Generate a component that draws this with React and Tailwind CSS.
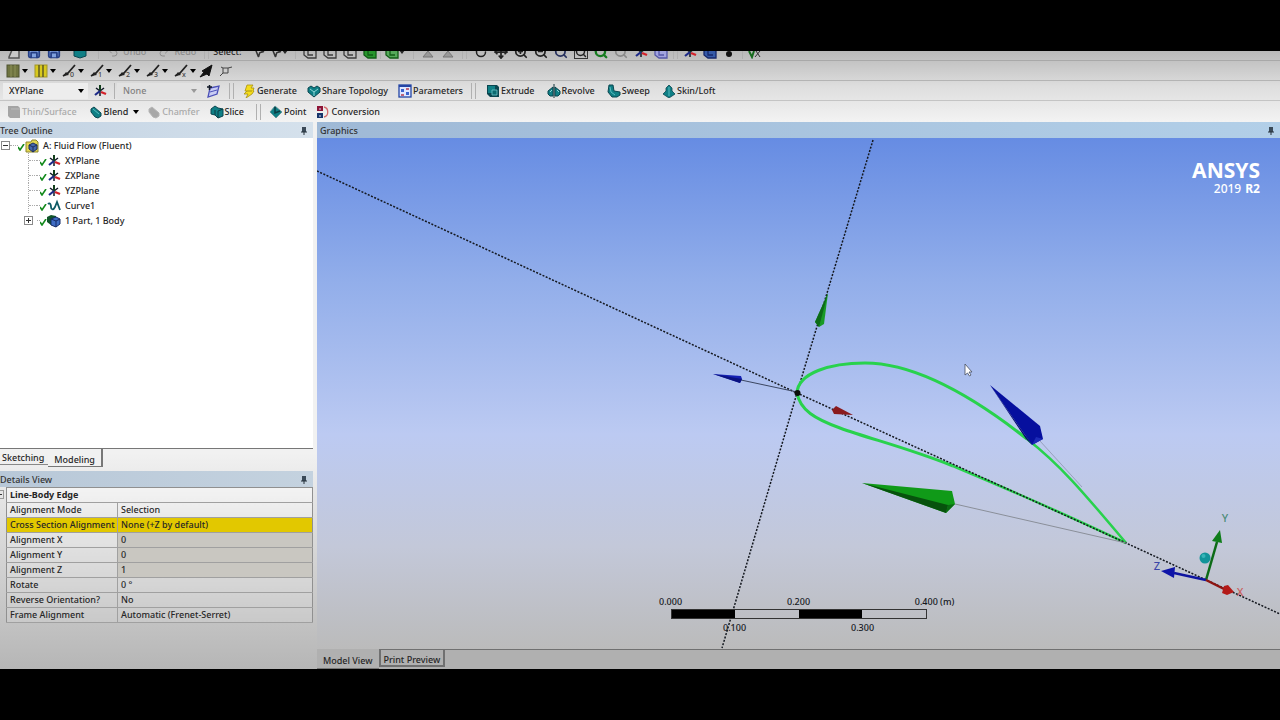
import clsx from 'clsx'
import { Undo2, Redo2, MousePointer2, Save, ZoomIn, ZoomOut, Search, Move, RotateCw } from 'lucide-react'

const teal = '#0f7f85'
const tealDark = '#0a4650'

function Glyph({ children, className }) {
  return (
    <svg viewBox="0 0 14 14" className={clsx('h-3.5 w-3.5 shrink-0', className)} aria-hidden="true">
      {children}
    </svg>
  )
}

function Caret({ className }) {
  return (
    <svg viewBox="0 0 6 4" className={clsx('h-1 w-1.5 shrink-0', className)} aria-hidden="true">
      <path d="M0 0h6L3 4z" fill="currentColor" />
    </svg>
  )
}

function Divider({ double }) {
  return (
    <span className="flex shrink-0 gap-[3px]">
      <span className="h-4 w-px bg-[#b0b0b0]" />
      {double && <span className="h-4 w-px bg-[#b0b0b0]" />}
    </span>
  )
}

function AxisIcon() {
  return (
    <Glyph>
      <path d="M7 7L3 4M7 7l4-3M7 7v5" stroke="#111827" strokeWidth="1.500" />
      <path d="M7 7V1" stroke="#123f1c" strokeWidth="2" />
      <path d="M7 7l-5 4" stroke="#1d2a88" strokeWidth="2.200" />
      <path d="M8 8l5 2" stroke="#d3222a" strokeWidth="2.200" />
    </Glyph>
  )
}

function GenerateIcon() {
  return (
    <Glyph>
      <path d="M5 1h6L9 4h3l-1 3h1l-2 3-6 4 2-4H2l3-3H3z" fill="#f4dc1a" stroke="#a89212" strokeWidth=".8" />
      <path d="M5 7h5" stroke="#a89212" />
    </Glyph>
  )
}

function ShareIcon() {
  return (
    <Glyph>
      <path d="M1 4l3-2 3 2 3-2 3 2v4l-6 5-6-5z" fill={teal} stroke={tealDark} />
      <path d="M3 5l4 3 4-3M7 8v4" stroke="#8fd6d6" fill="none" />
    </Glyph>
  )
}

function ParametersIcon() {
  return (
    <Glyph>
      <rect x="1" y="1" width="12" height="12" fill="#dfe7ff" stroke="#2445a5" strokeWidth="1.300" />
      <path d="M1 2h12" stroke="#2445a5" strokeWidth="2" />
      <path d="M3 5h3v3H3zM8 8h3v3H8z" fill="#3a62cf" />
      <path d="M8 5h3M3 11h3" stroke="#b33a4d" strokeWidth="1.500" />
    </Glyph>
  )
}

function ExtrudeIcon() {
  return (
    <Glyph>
      <path d="M1 1h10l2 2v10H4l-3-3z" fill={tealDark} />
      <path d="M2 2h7v7H2z" fill={teal} />
      <path d="M6 6h5v5H6z" fill="#0b6a70" stroke="#6fc7cb" strokeWidth=".8" />
    </Glyph>
  )
}

function RevolveIcon() {
  return (
    <Glyph>
      <path d="M6 3v9H3L1 10V7zM8 3v9h3l2-2V7z" fill={teal} stroke={tealDark} />
      <path d="M7 0v14" stroke="#10333b" />
      <path d="M3 8l2-2M10 6l2 2" stroke="#8fd6d6" />
    </Glyph>
  )
}

function SweepIcon() {
  return (
    <Glyph>
      <path d="M2 1h4l1 6 6 1v3l-3 2H5L1 8z" fill={teal} stroke={tealDark} />
      <path d="M3 3l1 5 4 3" stroke="#59bcc0" fill="none" />
    </Glyph>
  )
}

function LoftIcon() {
  return (
    <Glyph>
      <path d="M7 1l3 3v3l3 3-6 4-6-4 3-3V4z" fill={teal} stroke={tealDark} strokeWidth=".8" />
      <path d="M7 3v9" stroke="#59bcc0" />
    </Glyph>
  )
}

function ThinIcon() {
  return (
    <Glyph>
      <path d="M1 1h10l2 2v10H3l-2-2z" fill="#a5a5a5" />
      <path d="M4 4h9" stroke="#bcbcbc" />
    </Glyph>
  )
}

function BlendIcon({ disabled }) {
  return (
    <Glyph>
      <path
        d="M2 4l3-2 7 6v3l-3 2-3-1-4-5z"
        fill={disabled ? '#a8a8a8' : teal}
        stroke={disabled ? '#b5b5b5' : tealDark}
      />
      {!disabled && <path d="M4 4l6 5" stroke="#59bcc0" />}
    </Glyph>
  )
}

function SliceIcon() {
  return (
    <Glyph>
      <path d="M1 4l4-3 3 2 5 1v7l-5 2-3-3-4-1z" fill={teal} stroke={tealDark} />
      <path d="M5 5v5M8 6l5-2M8 6v7" stroke="#0a3c44" />
    </Glyph>
  )
}

function PointIcon() {
  return (
    <Glyph>
      <path d="M1 7l5-6 7 6-6 6z" fill={teal} stroke="#5c8f93" strokeWidth=".8" />
      <path d="M6 2v6l5-2" stroke="#0a3c44" strokeWidth="1.500" fill="none" />
    </Glyph>
  )
}

function ConversionIcon() {
  return (
    <Glyph>
      <path d="M1 1h6v5H1z" fill="#8d1436" />
      <path d="M1 8h6v5H1z" fill="#17356b" />
      <path d="M8 2c5 1 5 9 0 10" stroke="#d46a6a" fill="none" strokeWidth="1.300" />
      <path d="M4 3v2M4 10v2" stroke="#d8d8f0" />
    </Glyph>
  )
}

function NewPlaneIcon() {
  return (
    <Glyph>
      <path d="M4 4l9-2-2 8-9 3z" fill="#c9cdf4" stroke="#4b50b8" strokeWidth="1.300" />
      <path d="M4 8l7-2" stroke="#4b50b8" />
      <path d="M1 3h5M3.500 1v5" stroke="#111827" strokeWidth="1.500" />
    </Glyph>
  )
}

function CubeIcon({ color = '#3c3c3c', fill = 'none' }) {
  return (
    <Glyph>
      <path d="M1 3h8l4 3v7H5l-4-3z" fill={fill} stroke={color} strokeWidth="1.300" />
      <path d="M5 5v5h5" stroke={color} strokeWidth="1.300" fill="none" />
    </Glyph>
  )
}

function ToolButton({ icon, label, disabled, caret }) {
  return (
    <button
      type="button"
      disabled={disabled}
      className="flex shrink-0 items-center gap-px whitespace-nowrap text-[#262626] disabled:text-[#aaaaaa]"
    >
      {icon}
      <span>{label}</span>
      {caret && <Caret className="ml-1 text-black" />}
    </button>
  )
}

function IconSlot({ label, children }) {
  return (
    <button type="button" aria-label={label} className="flex h-3.5 w-5 shrink-0 items-center justify-center">
      {children}
    </button>
  )
}

function StandardBar() {
  return (
    <div className="flex h-2.5 items-end overflow-hidden border-b border-[#a8a8a8] pb-px pl-1">
      <IconSlot label="New">
        <Glyph><path d="M2 12L5 5h7v8H2z" fill="#c8c8c8" stroke="#555" strokeWidth="1.500" /></Glyph>
      </IconSlot>
      <IconSlot label="Save"><Save className="h-3.5 w-3.5 fill-[#7fa0dc] text-[#263f85]" strokeWidth={3} /></IconSlot>
      <IconSlot label="Save as"><Save className="h-3.5 w-3.5 fill-[#7fa0dc] text-[#263f85]" strokeWidth={3} /></IconSlot>
      <span className="w-1.5" />
      <IconSlot label="Image"><Glyph><path d="M1 4h12v7l-6 2-6-2z" fill={teal} stroke={tealDark} /></Glyph></IconSlot>
      <span className="ml-2"><Divider /></span>
      <button type="button" disabled className="ml-2 flex h-3.5 items-center gap-1 text-[#8d8d8d]">
        <Undo2 className="h-3 w-3" />Undo
      </button>
      <button type="button" disabled className="ml-3 flex h-3.5 items-center gap-1 text-[#8d8d8d]">
        <Redo2 className="h-3 w-3" />Redo
      </button>
      <span className="mr-1 ml-2"><Divider double /></span>
      <span className="flex h-3.5 w-9 items-center text-[#262626]">Select:</span>
      <IconSlot label="Select"><MousePointer2 className="h-3 w-3 text-[#333]" strokeWidth={3} /></IconSlot>
      <IconSlot label="Select mode"><MousePointer2 className="h-3 w-3 text-[#333]" strokeWidth={3} /><Caret /></IconSlot>
      <span className="mr-1 ml-1.5"><Divider /></span>
      <IconSlot label="Points"><CubeIcon /></IconSlot>
      <IconSlot label="Edges"><CubeIcon /></IconSlot>
      <IconSlot label="Faces"><CubeIcon /></IconSlot>
      <IconSlot label="Bodies"><CubeIcon color="#115c16" fill="#27962d" /></IconSlot>
      <span className="mr-1"><Divider /></span>
      <IconSlot label="Extend"><CubeIcon color="#115c16" fill="#55a85a" /><Caret /></IconSlot>
      <span className="mr-1 ml-2"><Divider /></span>
      <IconSlot label="Expand"><Glyph><path d="M2 12l5-6 5 6z" fill="#999" stroke="#777" /></Glyph></IconSlot>
      <IconSlot label="Shrink"><Glyph><path d="M2 12l5-6 5 6z" fill="#999" stroke="#777" /></Glyph></IconSlot>
      <span className="mr-1 ml-1"><Divider double /></span>
      <IconSlot label="Rotate"><RotateCw className="h-3 w-3 text-[#222]" strokeWidth={3} /></IconSlot>
      <IconSlot label="Pan"><Move className="h-3.5 w-3.5 text-[#222]" strokeWidth={3} /></IconSlot>
      <IconSlot label="Zoom in"><ZoomIn className="h-3.5 w-3.5 text-[#222]" strokeWidth={3} /></IconSlot>
      <IconSlot label="Zoom out"><ZoomOut className="h-3.5 w-3.5 text-[#222]" strokeWidth={3} /></IconSlot>
      <IconSlot label="Box zoom"><Search className="h-3.5 w-3.5 text-[#27315e]" strokeWidth={3} /></IconSlot>
      <IconSlot label="Zoom to fit"><Search className="h-3.5 w-3.5 border border-[#333] text-[#222]" strokeWidth={3} /></IconSlot>
      <IconSlot label="Magnify"><Search className="h-3.5 w-3.5 text-[#167b20]" strokeWidth={4} /></IconSlot>
      <IconSlot label="Previous view"><Search className="h-3.5 w-3.5 text-[#8a8a8a]" strokeWidth={3} /></IconSlot>
      <IconSlot label="Next view"><AxisIcon /></IconSlot>
      <IconSlot label="Iso view"><CubeIcon color="#5557a8" fill="#a2a4df" /></IconSlot>
      <span className="mx-0.5"><Divider double /></span>
      <IconSlot label="Display plane"><AxisIcon /></IconSlot>
      <IconSlot label="Display model"><CubeIcon color="#16276b" fill="#355aa8" /></IconSlot>
      <IconSlot label="Display points"><Glyph><circle cx="6" cy="9" r="3" fill="#111" /></Glyph></IconSlot>
      <span className="mx-0.5"><Divider /></span>
      <IconSlot label="Look at"><Glyph><path d="M1 6l3 6 2-6" stroke="#176b1e" strokeWidth="2" fill="none" /><path d="M7 12l5-6M8 6l4 6" stroke="#333" /></Glyph></IconSlot>
    </div>
  )
}

const edgeTools = ['0', '1', '2', '3', 'x']

function DisplayBar() {
  return (
    <div className="flex h-5 items-center border-b border-[#b4b4b4] pl-1.5 text-black">
      <button type="button" aria-label="Face color" className="flex w-7 shrink-0 items-center gap-0.5">
        <Glyph>
          <rect x="1" y="1" width="12" height="12" fill="#6f7440" stroke="#4f5330" />
          <path d="M5 1v12M9 1v12" stroke="#8d9158" />
        </Glyph>
        <Caret />
      </button>
      <button type="button" aria-label="Edge color" className="flex w-7 shrink-0 items-center gap-0.5">
        <Glyph>
          <rect x="1" y="1" width="12" height="12" fill="#d8c91c" stroke="#a1952a" />
          <path d="M5 1v12M9 1v12" stroke="#5d5a22" strokeWidth="1.500" />
        </Glyph>
        <Caret />
      </button>
      {edgeTools.map((name) => (
        <button key={name} type="button" aria-label={`Edge joints ${name}`} className="flex w-7 shrink-0 items-center">
          <svg viewBox="0 0 16 14" className="h-3.5 w-4" aria-hidden="true">
            <path d="M1 12l5-3 7-8" stroke="#222" strokeWidth="1.800" fill="none" />
            <path d="M1 12l6-1-3-3z" fill="#222" />
            <text x="8" y="13" fontSize="7" fill="#444">{name}</text>
          </svg>
          <Caret />
        </button>
      ))}
      <IconSlot label="Edge direction">
        <svg viewBox="0 0 14 14" className="-ml-3 h-3.5 w-3.5" aria-hidden="true">
          <path d="M1 13l4-5-2-1 10-6-3 11-2-2z" fill="#111" stroke="#111" />
        </svg>
      </IconSlot>
      <IconSlot label="Vertices">
        <svg viewBox="0 0 14 14" className="-ml-3 h-3.5 w-3.5" aria-hidden="true">
          <path d="M4 4h5v5H4zM9 4l4-1M4 9l-3 3M4 4L2 3" stroke="#444" fill="none" />
        </svg>
      </IconSlot>
    </div>
  )
}

function Combo({ label, value, disabled, className }) {
  return (
    <label className={clsx('relative flex shrink-0 items-center', className)}>
      <span className="sr-only">{label}</span>
      <select
        disabled={disabled}
        defaultValue={value}
        className="h-4 w-full appearance-none bg-[#ededed] pl-1.5 text-[9px] text-[#262626] disabled:bg-[#e2e2e2] disabled:text-[#808080] disabled:opacity-100"
      >
        <option>{value}</option>
      </select>
      <Caret className={clsx('absolute right-1', disabled ? 'text-[#999]' : 'text-black')} />
    </label>
  )
}

function FeatureBar() {
  return (
    <div className="flex h-5 items-center border-b border-[#c4c4c4] pl-[3px]">
      <Combo label="Active plane" value="XYPlane" className="w-[85px]" />
      <span className="ml-0.5 flex"><IconSlot label="Plane axes"><AxisIcon /></IconSlot></span>
      <span className="mr-0.5 ml-1"><Divider /></span>
      <Combo label="Active sketch" value="None" disabled className="w-[84px]" />
      <span className="ml-0.5 flex"><IconSlot label="New sketch"><NewPlaneIcon /></IconSlot></span>
      <span className="mr-2 ml-1.5"><Divider double /></span>
      <div className="flex gap-2.5">
        <ToolButton icon={<GenerateIcon />} label="Generate" />
        <ToolButton icon={<ShareIcon />} label="Share Topology" />
        <ToolButton icon={<ParametersIcon />} label="Parameters" />
      </div>
      <span className="mr-2.5 ml-2"><Divider double /></span>
      <div className="flex gap-3">
        <ToolButton icon={<ExtrudeIcon />} label="Extrude" />
        <ToolButton icon={<RevolveIcon />} label="Revolve" />
        <ToolButton icon={<SweepIcon />} label="Sweep" />
        <ToolButton icon={<LoftIcon />} label="Skin/Loft" />
      </div>
    </div>
  )
}

function ModifyBar() {
  return (
    <div className="flex h-[21px] items-center pl-[7px]">
      <div className="flex gap-3">
        <ToolButton icon={<ThinIcon />} label="Thin/Surface" disabled />
        <ToolButton icon={<BlendIcon />} label="Blend" caret />
        <div className="-ml-1 flex gap-2.5">
          <ToolButton icon={<BlendIcon disabled />} label="Chamfer" disabled />
          <ToolButton icon={<SliceIcon />} label="Slice" />
        </div>
      </div>
      <span className="mr-2 ml-3"><Divider double /></span>
      <div className="flex gap-2.5">
        <ToolButton icon={<PointIcon />} label="Point" />
        <ToolButton icon={<ConversionIcon />} label="Conversion" />
      </div>
    </div>
  )
}

function PaneTitle({ children, className }) {
  return (
    <div className={clsx('flex h-4 shrink-0 items-center justify-between pt-px pr-1.5 text-[#333]', className)}>
      <h2>{children}</h2>
      <svg viewBox="0 0 6 8" className="h-2 w-1.5" aria-hidden="true">
        <path d="M1 0h4v5H1z" fill="#3b4a58" />
        <path d="M0 5h6M3 5v3" stroke="#26323d" />
      </svg>
    </div>
  )
}

function Expander({ open }) {
  return (
    <button
      type="button"
      aria-label={open ? 'Collapse' : 'Expand'}
      className="flex h-[9px] w-[9px] shrink-0 items-center justify-center border border-[#8a8a8a] bg-white"
    >
      <svg viewBox="0 0 5 5" className="h-[5px] w-[5px]" aria-hidden="true">
        <path d={open ? 'M0 2.500h5' : 'M0 2.500h5M2.500 0v5'} stroke="#333" />
      </svg>
    </button>
  )
}

function Check() {
  return (
    <svg viewBox="0 0 7 7" className="mt-1 h-[7px] w-[7px] shrink-0" aria-hidden="true">
      <path d="M0 3l2 3 4-6" stroke="#138a1c" strokeWidth="1.600" fill="none" />
    </svg>
  )
}

const treeItems = [
  { label: 'XYPlane', icon: <AxisIcon /> },
  { label: 'ZXPlane', icon: <AxisIcon /> },
  { label: 'YZPlane', icon: <AxisIcon /> },
  {
    label: 'Curve1',
    icon: <Glyph><path d="M1 5c2-2 3 1 3 3s2 4 4 0l2-5 3 8" stroke="#0d5964" strokeWidth="1.800" fill="none" /></Glyph>,
  },
  {
    label: '1 Part, 1 Body',
    expandable: true,
    icon: (
      <Glyph>
        <path d="M0 3l4-2 5 1v8l-5 1-4-3z" fill="#10542a" />
        <path d="M4 5l5-2 4 2v5l-4 3-5-2z" fill="#3f6dc4" stroke="#152b66" />
        <path d="M4 5l5 2 4-2M9 7v6" stroke="#152b66" fill="none" />
      </Glyph>
    ),
  },
]

function TreeOutline() {
  return (
    <div className="min-h-0 flex-1 bg-white">
      <div className="flex h-[15px] items-center pl-px">
        <Expander open />
        <span className="w-2 border-t border-dotted border-[#aaa]" />
        <Check />
        <Glyph>
          <path d="M1 3h5l1-2h4l2 2v10H1z" fill="#e4d850" stroke="#8c8630" />
          <path d="M4 6l4-2 4 2v4l-4 3-4-3z" fill="#4668ae" stroke="#1e2f5d" />
          <path d="M4 6l4 2 4-2M8 8v5" stroke="#1e2f5d" fill="none" />
        </Glyph>
        <span className="ml-1">A: Fluid Flow (Fluent)</span>
      </div>
      <ul className="ml-7">
        {treeItems.map((item) => (
          <li
            key={item.label}
            className={clsx(
              'flex h-[15px] items-center',
              !item.expandable && 'border-l border-dotted border-[#aaa]',
            )}
          >
            {item.expandable ? (
              <span className="-ml-1 flex w-[13px] items-center"><Expander /></span>
            ) : (
              <span className="w-2 border-t border-dotted border-[#aaa]" />
            )}
            <span className="w-[3px] border-t border-dotted border-[#aaa]" />
            <Check />
            <span className="flex">{item.icon}</span>
            <span className="ml-1">{item.label}</span>
          </li>
        ))}
      </ul>
    </div>
  )
}

const details = [
  ['Alignment Mode', 'Selection'],
  ['Cross Section Alignment', 'None (+Z by default)', 'selected'],
  ['Alignment X', '0', 'locked'],
  ['Alignment Y', '0', 'locked'],
  ['Alignment Z', '1', 'locked'],
  ['Rotate', '0 °'],
  ['Reverse Orientation?', 'No'],
  ['Frame Alignment', 'Automatic (Frenet-Serret)'],
]

function DetailsView() {
  return (
    <div className="flex">
      <div className="flex h-[15px] w-1.5 shrink-0 items-center overflow-hidden">
        <button
          type="button"
          aria-label="Collapse group"
          className="flex h-[9px] w-1 items-center border border-l-0 border-[#999]"
        >
          <span className="h-px w-0.5 bg-[#333]" />
        </button>
      </div>
      <table className="w-full table-fixed border-collapse border border-[#909090] bg-linear-to-b from-[#f3f3f3] to-[#c9c9c9] text-left">
        <colgroup>
          <col className="w-[111px]" />
          <col />
        </colgroup>
        <thead>
          <tr className="h-[15px] border-b border-[#a0a0a0]">
            <th colSpan={2} className="p-0 pl-[3px] font-bold">Line-Body Edge</th>
          </tr>
        </thead>
        <tbody>
          {details.map(([name, value, state]) => (
            <tr key={name} className={clsx('h-[15px] border-b border-[#a0a0a0]', state === 'selected' && 'bg-[#e2c800]')}>
              <th className="truncate border-r border-[#a0a0a0] p-0 pl-[3px] font-medium">{name}</th>
              <td className={clsx('truncate p-0 pl-[3px]', state === 'locked' && 'bg-[#c9c7c1]')}>{value}</td>
            </tr>
          ))}
        </tbody>
      </table>
    </div>
  )
}

function SidePanel() {
  return (
    <aside className="flex w-[313px] shrink-0 flex-col">
      <PaneTitle className="bg-linear-to-r from-[#c3d3e3] to-[#d5e1ec]">Tree Outline</PaneTitle>
      <TreeOutline />
      <div className="flex h-[23px] shrink-0 items-start border-t border-[#777]">
        <button type="button" className="h-4 border-b border-[#888] pt-0.5 pr-1 pl-0.5">Sketching</button>
        <button type="button" className="h-[18px] border-r-2 border-b border-[#777] bg-[#f1f1f1] px-1.5 pt-1">
          Modeling
        </button>
      </div>
      <PaneTitle className="bg-linear-to-r from-[#b8c8d8] to-[#c4d2df]">Details View</PaneTitle>
      <DetailsView />
      <div className="h-[46px] shrink-0" />
    </aside>
  )
}

function Scene() {
  return (
    <svg
      viewBox="317 138 963 511"
      preserveAspectRatio="xMidYMid slice"
      className="absolute inset-0 h-full w-full"
      role="img"
      aria-label="Airfoil curve on the XY plane"
    >
      <path d="M873 140L797 393L722 648" stroke="#14181f" strokeWidth="1.500" strokeDasharray="2 1.500" fill="none" />

      <g fill="none" stroke="#28d24c" strokeLinejoin="round">
        <path d="M797 393C798 373 830 363 865 363C917 363 975 398 1027 439" strokeWidth="3" />
        <path d="M1027 439C1062 466 1088 498 1126 543" strokeWidth="2.500" />
        <path d="M797 393C800 410 815 419 840 428C870 439 905 447 953 466" strokeWidth="3" />
        <path d="M953 466C1010 490 1065 514 1126 543" strokeWidth="2.500" />
      </g>
      <path d="M317 171L797 393L1126 543L1280 614" stroke="#14181f" strokeWidth="1.500" strokeDasharray="2 1.500" fill="none" />

      <path d="M741 380L797 392" stroke="#3b4660" />
      <path d="M713 374L741 376L742 379L740 383z" fill="#1420b4" />
      <path d="M713 374L742 379L740 383z" fill="#0a1280" />
      <path d="M828 293L824 324L819 327L815 322z" fill="#189a26" />
      <path d="M828 293L819 327L815 322z" fill="#0c6b18" />
      <path d="M832 410L836 406L853 415L834 414z" fill="#8a1a1e" />
      <circle cx="797.500" cy="393" r="3" fill="#0b0f0b" />

      <path d="M1040 441L1082 487" stroke="#98a1bd" />
      <path d="M990 385L1040 426L1043 439L1032 445z" fill="#060f9e" />
      <path d="M990 385L1032 445L1026 439z" fill="#040970" />
      <path d="M1032 445L1036 437L1043 439z" fill="#1c2ab8" />

      <path d="M955 504L1126 543" stroke="#8a8f99" />
      <path d="M862 483L952 491L955 504L946 513z" fill="#109a18" />
      <path d="M862 483L948 505L946 513z" fill="#07520d" />
      <path d="M948 505L955 504L946 513z" fill="#0a6c12" />

      <path d="M965 364v11l2.500-2 2 3 1.500-1-2-3h3z" fill="#fff" stroke="#444c60" strokeWidth=".8" />

      <circle cx="1205" cy="558" r="5.500" fill="#12949a" />
      <circle cx="1203.500" cy="556" r="2" fill="#37b5b8" />
      <path d="M1206 580L1217 542" stroke="#0d6b17" strokeWidth="2.500" />
      <path d="M1220 530L1222 543L1212 541z" fill="#0f7d1a" />
      <path d="M1206 580L1174 573" stroke="#0e14a0" strokeWidth="2.500" />
      <path d="M1161 571L1175 567L1174 578z" fill="#0e14a8" />
      <path d="M1206 580L1224 589" stroke="#8e1512" strokeWidth="2.500" />
      <path d="M1222 593L1224 586L1228 585L1234 592L1227 595z" fill="#b31a18" />
      <g fontSize="11" textAnchor="middle">
        <text x="1225" y="522" fill="#4e8c79">Y</text>
        <text x="1157" y="570" fill="#3b46a8">Z</text>
        <text x="1240" y="596" fill="#c8605f">X</text>
      </g>
    </svg>
  )
}

function Tick({ children }) {
  return <span className="flex w-0 justify-center whitespace-nowrap">{children}</span>
}

function ScaleBar() {
  return (
    <div className="absolute bottom-3.5 left-1/2 w-64 -translate-x-1/2 leading-[14px] text-[#15181d]">
      <div className="flex justify-between">
        <Tick>0.000</Tick>
        <Tick>0.200</Tick>
        <Tick><span className="ml-4">0.400 (m)</span></Tick>
      </div>
      <div className="grid h-2.5 grid-cols-4 border border-[#333]">
        <span className="bg-black" />
        <span />
        <span className="bg-black" />
        <span />
      </div>
      <div className="mt-0.5 flex justify-between px-16">
        <Tick>0.100</Tick>
        <Tick>0.300</Tick>
      </div>
    </div>
  )
}

function GraphicsPanel() {
  return (
    <main className="ml-1 flex min-w-0 flex-1 flex-col">
      <PaneTitle className="bg-linear-to-r from-[#9fb9d6] to-[#b2cfe8] pl-[3px]">Graphics</PaneTitle>
      <div className="relative min-h-0 flex-1 overflow-hidden bg-[linear-gradient(to_bottom,#668ce3_0%,#92aeea_28%,#bccaf2_58%,#c3c8d9_80%,#bbbbbb_100%)]">
        <Scene />
        <div className="absolute top-5 right-5 flex flex-col items-end text-white">
          <p className="text-[21px] leading-6 font-bold">ANSYS</p>
          <p className="flex gap-1 text-[12px] leading-3.5">
            <span>2019</span>
            <b>R2</b>
          </p>
        </div>
        <ScaleBar />
      </div>
      <div className="flex h-5 shrink-0 items-start bg-[#b0b0b0]">
        <button type="button" className="h-5 border-b border-[#777] px-1.5 pt-1">Model View</button>
        <button type="button" className="h-[18px] border-2 border-t border-[#707070] px-[3px] pt-1">Print Preview</button>
        <span className="flex-1 border-t border-[#707070]" />
      </div>
    </main>
  )
}

export default function App() {
  return (
    <div className="flex h-screen w-full flex-col overflow-hidden bg-black py-[51px] font-['Noto_Sans','Open_Sans',sans-serif] text-[9px] leading-3 font-medium text-[#262626]">
      <div className="flex min-h-0 flex-1 flex-col bg-linear-to-b from-[#f1f1f1] from-65% to-[#b6b6b6]">
        <header className="h-[71px] shrink-0 bg-linear-to-b from-[#b9b9b9] via-[#dedede] via-50% to-[#f3f3f3]">
          <StandardBar />
          <DisplayBar />
          <FeatureBar />
          <ModifyBar />
        </header>
        <div className="flex min-h-0 flex-1">
          <SidePanel />
          <GraphicsPanel />
        </div>
      </div>
    </div>
  )
}
